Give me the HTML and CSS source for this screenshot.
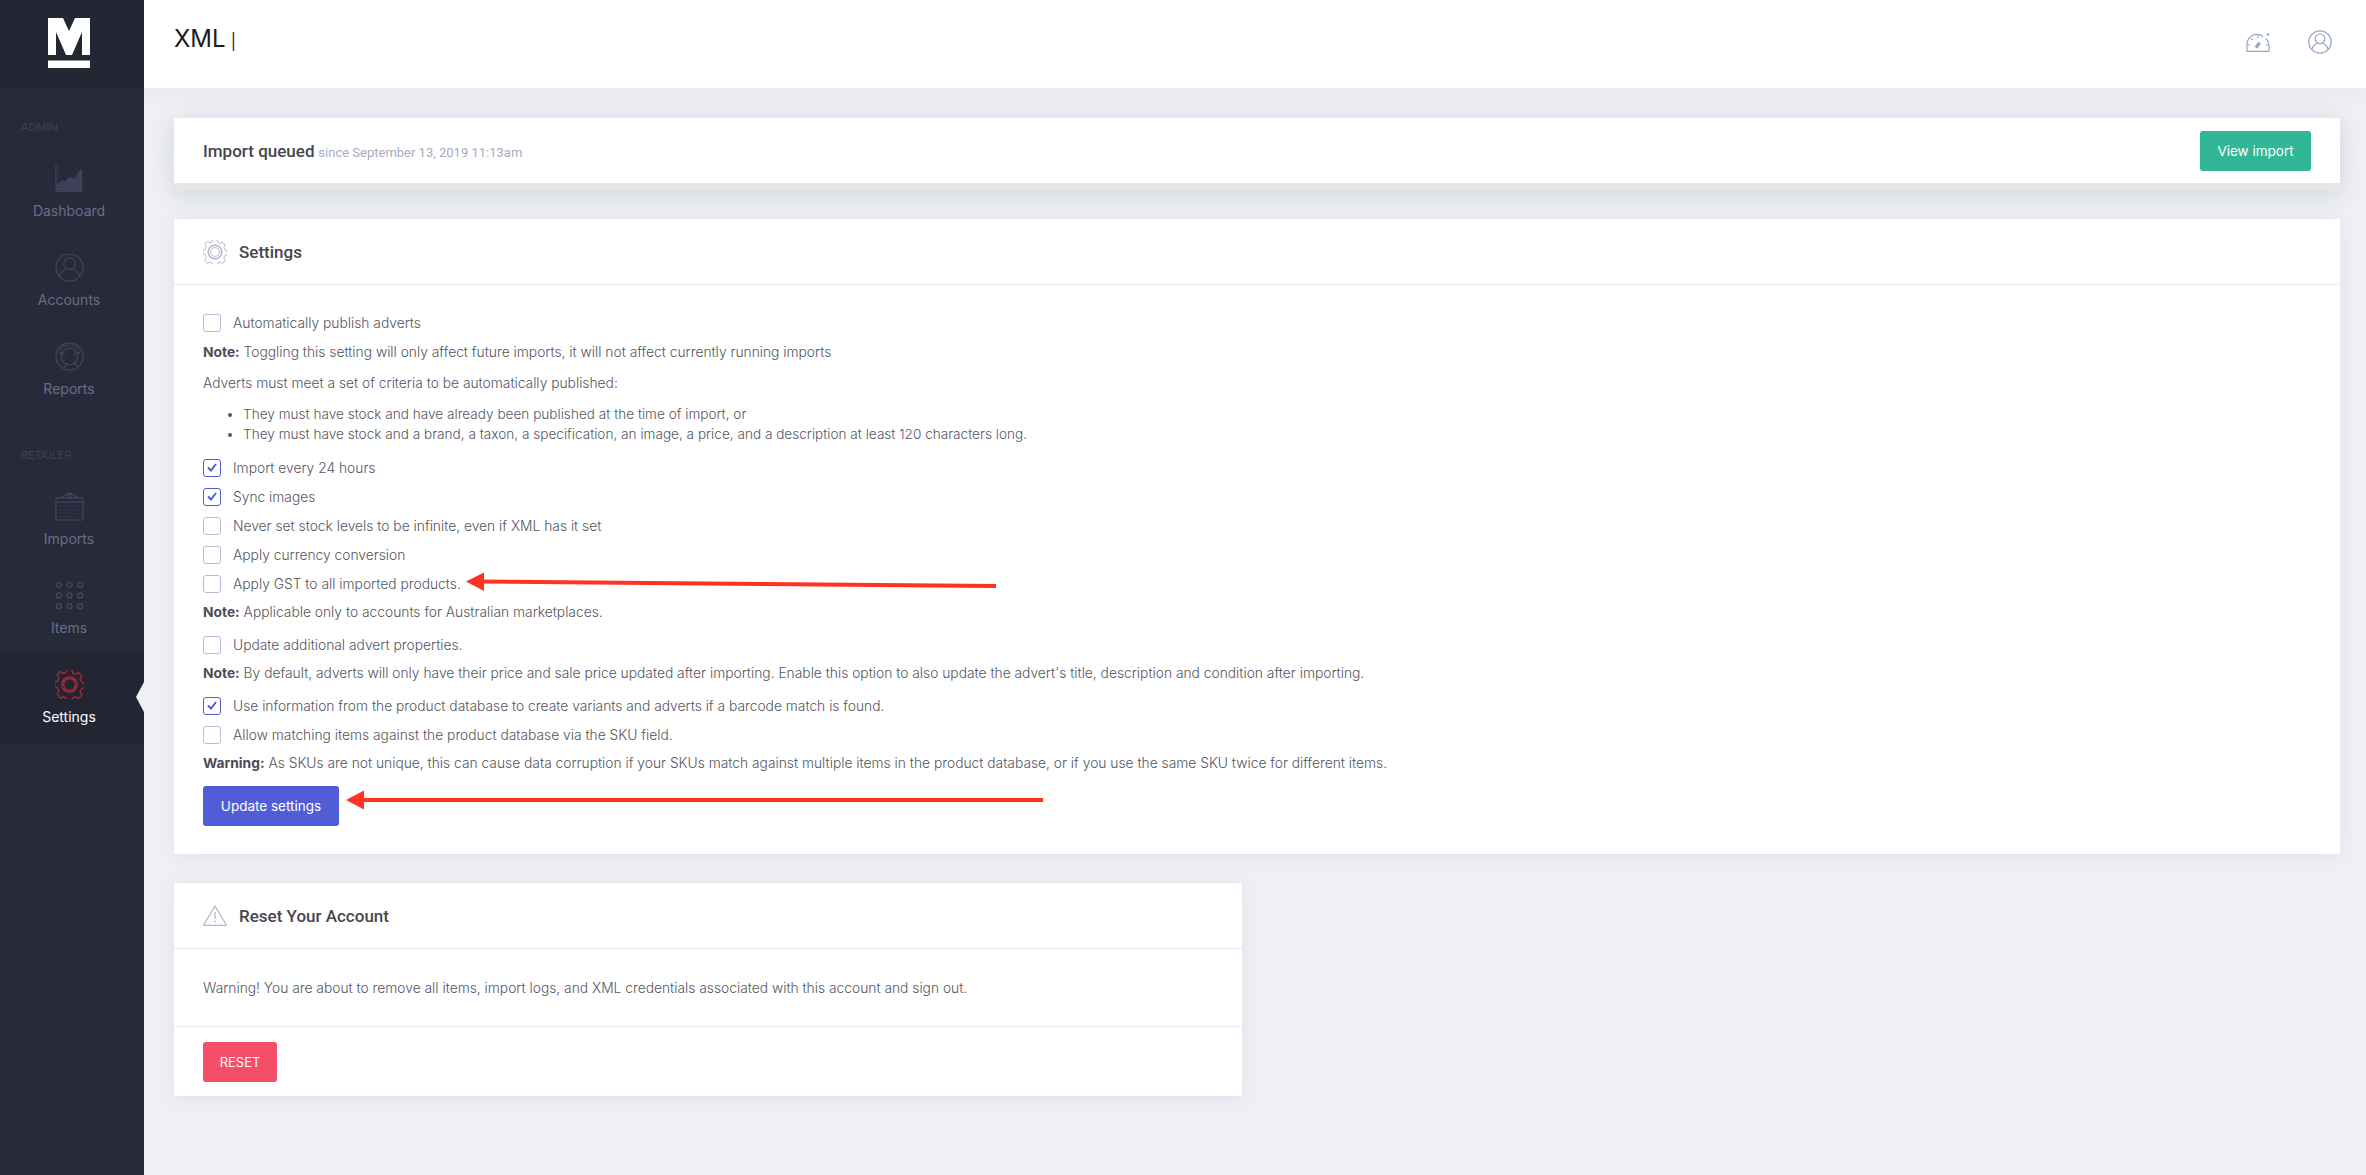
FILE: index.html
```html
<!DOCTYPE html>
<html lang="en">
<head>
    <meta charset="UTF-8">
    <meta name="viewport" content="width=device-width, initial-scale=1.0">
    <title>XML Settings</title>
    <link rel="stylesheet" href="styles.css">
</head>
<body>
    <aside class="sidebar">
        <div class="logo">
            <svg width="42" height="50" viewBox="0 0 42 50">
                <path fill="#fff" d="M0 0H15L21 13 27 0H42V37H34V14L24 37H18L8 14V37H0z"/>
                <rect y="42.500" width="42" height="7.500" fill="#fff"/>
            </svg>
        </div>

        <div class="nav-label nav-label-first">ADMIN</div>
        <a class="nav-item">
            <svg class="nav-icon" viewBox="0 0 30 30" fill="none" stroke="currentColor">
                <path d="M1 0v28.500H29"/>
                <path d="M3 2v24" stroke-dasharray="1 1.500"/>
                <path d="M2 22L8 17l2 2.500 5.700-5.800 4 2.300 7.800-10.700V27H2z" fill="#3d4058" stroke-width="1"/>
            </svg>
            <span>Dashboard</span>
        </a>
        <a class="nav-item">
            <svg class="nav-icon" viewBox="0 0 30 30" fill="none" stroke="currentColor" stroke-width="1.200">
                <circle cx="15" cy="15" r="14"/>
                <circle cx="15" cy="11" r="6"/>
                <path d="M5 24c1-5 5-7 7-8M25 24c-1-5-5-7-7-8"/>
            </svg>
            <span>Accounts</span>
        </a>
        <a class="nav-item">
            <svg class="nav-icon" viewBox="0 0 30 30" fill="none" stroke="currentColor" stroke-width="1.200">
                <circle cx="15" cy="15" r="14"/>
                <circle cx="15" cy="15" r="8.500"/>
                <path d="M4 11l7 2M26 11l-7 2M9 27l4-5M24 25l-5-4"/>
                <path d="M4 9a12.500 12.500 0 0 1 22 0" stroke-width="4" stroke-dasharray="1 1" opacity=".7"/>
            </svg>
            <span>Reports</span>
        </a>

        <div class="nav-label">RETAILER</div>
        <a class="nav-item">
            <svg class="nav-icon" viewBox="0 0 30 30" fill="none" stroke="currentColor" stroke-width="1.200">
                <rect x="1" y="6" width="28" height="23" rx="1"/>
                <path d="M1 10.500h28M6 6l9-5 9 5"/>
                <circle cx="15" cy="4.500" r="2"/>
                <path d="M5 15h20M5 18.500h20M5 22h20M5 25.500h14" stroke-dasharray="1 2"/>
            </svg>
            <span>Imports</span>
        </a>
        <a class="nav-item">
            <svg class="nav-icon" viewBox="0 0 30 30" fill="none" stroke="currentColor" stroke-width="1.500">
                <circle cx="4" cy="4" r="2.600"/>
                <circle cx="15" cy="4" r="2.600"/>
                <circle cx="26" cy="4" r="2.600"/>
                <circle cx="4" cy="15" r="2.600"/>
                <circle cx="15" cy="15" r="2.600"/>
                <circle cx="26" cy="15" r="2.600"/>
                <circle cx="4" cy="26" r="2.600"/>
                <circle cx="15" cy="26" r="2.600"/>
                <circle cx="26" cy="26" r="2.600"/>
            </svg>
            <span>Items</span>
        </a>
        <a class="nav-item active">
            <svg class="nav-icon" viewBox="0 0 30 30" fill="none" stroke="currentColor" stroke-width="1.200">
                <path d="M12.500 1h5l1 3.500 3 1.300 3.200-1.800 3.300 3.600-1.800 3 1.300 3 3 1v4.800l-3 1-1.300 3 1.800 3-3.300 3.600-3.200-1.800-3 1.300-1 3.500h-5l-1-3.500-3-1.300-3.200 1.800L2 25.400l1.800-3-1.300-3-3-1V13.600l3-1 1.300-3-1.800-3L5.300 3l3.200 1.800 3-1.300z" transform="translate(.3 -1.500) scale(.98 1.030)"/>
                <circle cx="15" cy="15" r="8"/>
                <circle cx="15" cy="15" r="6"/>
                <path d="M8 15a7 7 0 0 1 13-3.500M22 15a7 7 0 0 1-12 5" stroke-width=".8"/>
            </svg>
            <span>Settings</span>
            <i class="notch"></i>
        </a>
    </aside>

    <div class="main">
        <header class="topbar">
            <h1>XML<span class="cursor">|</span></h1>
            <div class="topbar-icons">
                <svg width="24" height="20" viewBox="0 0 24 20" fill="none" stroke="#9aa3c7" stroke-width="1.200">
                    <path d="M3 19.300H1V13a10 10 0 0 1 16-8.500M19.800 6.500A10 10 0 0 1 23 13v6.300H3"/>
                    <path d="M9.500 14.500l3-4 1.500 1.300-2.800 4z" fill="#9aa3c7"/>
                    <circle cx="22" cy="2.500" r="1.300" fill="#9aa3c7" stroke="none"/>
                    <path d="M1.500 13h2.500M20 13h2.500M12 3.500v2.500M5 6.500l1.500 1.500"/>
                </svg>
                <svg width="24" height="24" viewBox="0 0 30 30" fill="none" stroke="#9aa3c7" stroke-width="1.500">
                    <circle cx="15" cy="15" r="14"/>
                    <circle cx="15" cy="11" r="6"/>
                    <path d="M5 24c1-5 5-7 7-8M25 24c-1-5-5-7-7-8"/>
                </svg>
            </div>
        </header>

        <div class="content">
            <section class="card status-card">
                <div class="status-text"><strong>Import queued</strong> <small>since September 13, 2019 11:13am</small></div>
                <a class="btn btn-green">View import</a>
            </section>

            <section class="card">
                <div class="card-head">
                    <svg width="24" height="24" viewBox="0 0 30 30" fill="none" stroke="#b5b5d0" stroke-width="1.200">
                        <path d="M12.500 1h5l1 3.500 3 1.300 3.200-1.800 3.300 3.600-1.800 3 1.300 3 3 1v4.800l-3 1-1.300 3 1.800 3-3.300 3.600-3.200-1.800-3 1.300-1 3.500h-5l-1-3.500-3-1.300-3.200 1.800L2 25.400l1.800-3-1.300-3-3-1V13.600l3-1 1.300-3-1.800-3L5.300 3l3.200 1.800 3-1.300z" transform="translate(.3 -1.500) scale(.98 1.030)"/>
                        <circle cx="15" cy="15" r="8.500" stroke-width="2"/>
                        <circle cx="15" cy="15" r="5.500"/>
                    </svg>
                    <h2>Settings</h2>
                </div>
                <div class="card-body">
                    <label class="check-row"><span class="check"></span>Automatically publish adverts</label>
                    <p class="note note-first"><b>Note:</b> Toggling this setting will only affect future imports, it will not affect currently running imports</p>
                    <p class="note intro">Adverts must meet a set of criteria to be automatically published:</p>
                    <ul class="rules">
                        <li>They must have stock and have already been published at the time of import, or</li>
                        <li>They must have stock and a brand, a taxon, a specification, an image, a price, and a description at least 120 characters long.</li>
                    </ul>
                    <label class="check-row"><span class="check on"><svg width="10" height="9" viewBox="0 0 10 9"><path d="M1 4.500l3 3L9 1" fill="none" stroke="#4f5bd5" stroke-width="2"/></svg></span>Import every 24 hours</label>
                    <label class="check-row"><span class="check on"><svg width="10" height="9" viewBox="0 0 10 9"><path d="M1 4.500l3 3L9 1" fill="none" stroke="#4f5bd5" stroke-width="2"/></svg></span>Sync images</label>
                    <label class="check-row"><span class="check"></span>Never set stock levels to be infinite, even if XML has it set</label>
                    <label class="check-row"><span class="check"></span>Apply currency conversion</label>
                    <label class="check-row"><span class="check"></span>Apply GST to all imported products.</label>
                    <p class="note"><b>Note:</b> Applicable only to accounts for Australian marketplaces.</p>
                    <label class="check-row gap-top"><span class="check"></span>Update additional advert properties.</label>
                    <p class="note"><b>Note:</b> By default, adverts will only have their price and sale price updated after importing. Enable this option to also update the advert's title, description and condition after importing.</p>
                    <label class="check-row gap-top"><span class="check on"><svg width="10" height="9" viewBox="0 0 10 9"><path d="M1 4.500l3 3L9 1" fill="none" stroke="#4f5bd5" stroke-width="2"/></svg></span>Use information from the product database to create variants and adverts if a barcode match is found.</label>
                    <label class="check-row"><span class="check"></span>Allow matching items against the product database via the SKU field.</label>
                    <p class="note"><b>Warning:</b> As SKUs are not unique, this can cause data corruption if your SKUs match against multiple items in the product database, or if you use the same SKU twice for different items.</p>
                    <a class="btn btn-blue">Update settings</a>
                </div>
            </section>

            <section class="card reset-card">
                <div class="card-head">
                    <svg width="24" height="21" viewBox="0 0 24 21" fill="none" stroke="#b5b5d0" stroke-width="1.300">
                        <path d="M12 1L23 19.500a.5.5 0 0 1-.5.8H1.500a.5.5 0 0 1-.5-.8z"/>
                        <path d="M12 7v7M12 15.500v2"/>
                    </svg>
                    <h2>Reset Your Account</h2>
                </div>
                <p class="reset-text">Warning! You are about to remove all items, import logs, and XML credentials associated with this account and sign out.</p>
                <div class="reset-foot"><a class="btn btn-red">RESET</a></div>
            </section>
        </div>
    </div>

    <!-- red annotation arrows drawn over the screenshot -->
    <svg class="arrows" width="2366" height="1175" viewBox="0 0 2366 1175">
        <path d="M476 581.500L996 586" stroke="#ff3224" stroke-width="4"/>
        <path d="M466 581.500L484 572.500V591z" fill="#ff3224"/>
        <path d="M360 800H1043" stroke="#ff3224" stroke-width="4"/>
        <path d="M346 800L364 790.500V809.500z" fill="#ff3224"/>
    </svg>
</body>
</html>
```

FILE: styles.css
```css
* {
    box-sizing: border-box;
}

html, body {
    height: 100%;
}

body {
    margin: 0;
    display: flex;
    min-height: 1175px;
    overflow: hidden;
    position: relative;
    background-color: #eef0f5;
    color: #55565f;
    font-family: Inter, 'Open Sans', sans-serif;
    font-size: 13.8px;
    font-weight: 300;
}

/* sidebar */
.sidebar {
    flex: 0 0 144px;
    background-color: #272a38;
    color: #565874;
}

.logo {
    height: 88px;
    padding: 18px 6px 0 0;
    text-align: center;
    background-color: #232633;
}

.nav-label {
    height: 20px;
    margin: 31px 0 10px;
    padding-left: 21px;
    font-size: 11px;
    line-height: 20px;
    font-weight: 400;
    color: #3e4059;
}

.nav-label-first {
    margin-top: 29px;
}

.nav-item {
    display: flex;
    flex-direction: column;
    align-items: center;
    position: relative;
    height: 89px;
    padding: 17px 6px 0 0;
    font-size: 14px;
    line-height: 17px;
    font-weight: 400;
    color: #6a6c8c;
}

.nav-icon {
    width: 29px;
    height: 29px;
    margin-bottom: 9px;
    color: #43465f;
}

.nav-item.active {
    height: 91px;
    background-color: #232532;
    color: #fff;
}

.nav-item.active .nav-icon {
    color: #b02a3e;
}

.notch {
    position: absolute;
    right: 0;
    top: 29px;
    border-top: 15px solid transparent;
    border-bottom: 15px solid transparent;
    border-right: 8px solid #eef0f5;
}

/* main column */
.main {
    flex: 1;
    min-width: 0;
}

.topbar {
    display: flex;
    align-items: center;
    justify-content: space-between;
    height: 88px;
    padding: 0 34px 12px 30px;
    background-color: #fff;
    box-shadow: 0 4px 20px rgba(60, 60, 100, 0.06);
}

.topbar h1 {
    margin: 0;
    font-size: 24px;
    font-weight: 400;
    color: #1c1c22;
}

.cursor {
    margin-left: 5px;
    font-size: 16px;
    font-weight: 400;
}

.topbar-icons {
    display: flex;
    align-items: center;
    gap: 38px;
    margin-top: 7px;
}

.content {
    padding: 30px 26px 0 30px;
}

.card {
    margin-bottom: 29px;
    background-color: #fff;
    box-shadow: 0 2px 20px rgba(60, 60, 100, 0.08);
}

.status-card {
    display: flex;
    align-items: center;
    justify-content: space-between;
    height: 72px;
    padding: 0 29px;
    border-bottom: 7px solid #e4e6ea;
    box-shadow: 0 4px 24px rgba(60, 60, 100, 0.16);
}

.status-text strong {
    font-family: Roboto, sans-serif;
    font-size: 17px;
    font-weight: 500;
    color: #45464e;
}

.status-text small {
    font-family: Roboto, sans-serif;
    font-size: 13px;
    font-weight: 400;
    color: #a9abc0;
}

.card-head {
    display: flex;
    align-items: center;
    gap: 12px;
    height: 66px;
    padding-left: 29px;
    border-bottom: 1px solid #e8e9ee;
}

.card-head h2 {
    margin: 0;
    font-family: Roboto, sans-serif;
    font-size: 17px;
    font-weight: 500;
    color: #45464e;
}

.card-body {
    padding: 23px 29px 28px;
}

.check-row {
    display: flex;
    align-items: center;
    height: 29px;
}

.gap-top {
    margin-top: 3px;
}

.check {
    display: flex;
    align-items: center;
    justify-content: center;
    flex: 0 0 18px;
    height: 18px;
    margin-right: 12px;
    border: 1px solid #b9bcd8;
    border-radius: 3px;
}

.check.on {
    border-color: #4f5bd5;
}

.note {
    height: 29px;
    margin: 0;
    line-height: 29px;
}

.note b {
    font-weight: 700;
    color: #4c4d56;
}

.note-first {
    margin-top: 1px;
}

.intro {
    margin-top: 2px;
}

.rules {
    height: 40px;
    margin: 6px 0 9px;
    padding: 0 0 0 40px;
    font-size: 13.6px;
    line-height: 20px;
}

.btn {
    display: inline-flex;
    align-items: center;
    justify-content: center;
    height: 40px;
    border-radius: 3px;
    font-size: 13.5px;
    font-weight: 400;
    color: #fff;
}

.btn-green {
    width: 111px;
    background-color: #32b796;
}

.btn-blue {
    width: 136px;
    margin-top: 8px;
    background-color: #505dd6;
}

.btn-red {
    width: 74px;
    font-size: 13px;
    background-color: #f44e68;
}

.reset-card {
    width: 1068px;
    margin-bottom: 0;
}

.reset-text {
    height: 78px;
    margin: 0;
    padding-left: 29px;
    line-height: 78px;
    border-bottom: 1px solid #e8e9ee;
}

.reset-foot {
    height: 69px;
    padding: 15px 29px 0;
}

/* annotation overlay */
.arrows {
    position: absolute;
    top: 0;
    left: 0;
    pointer-events: none;
}
```
